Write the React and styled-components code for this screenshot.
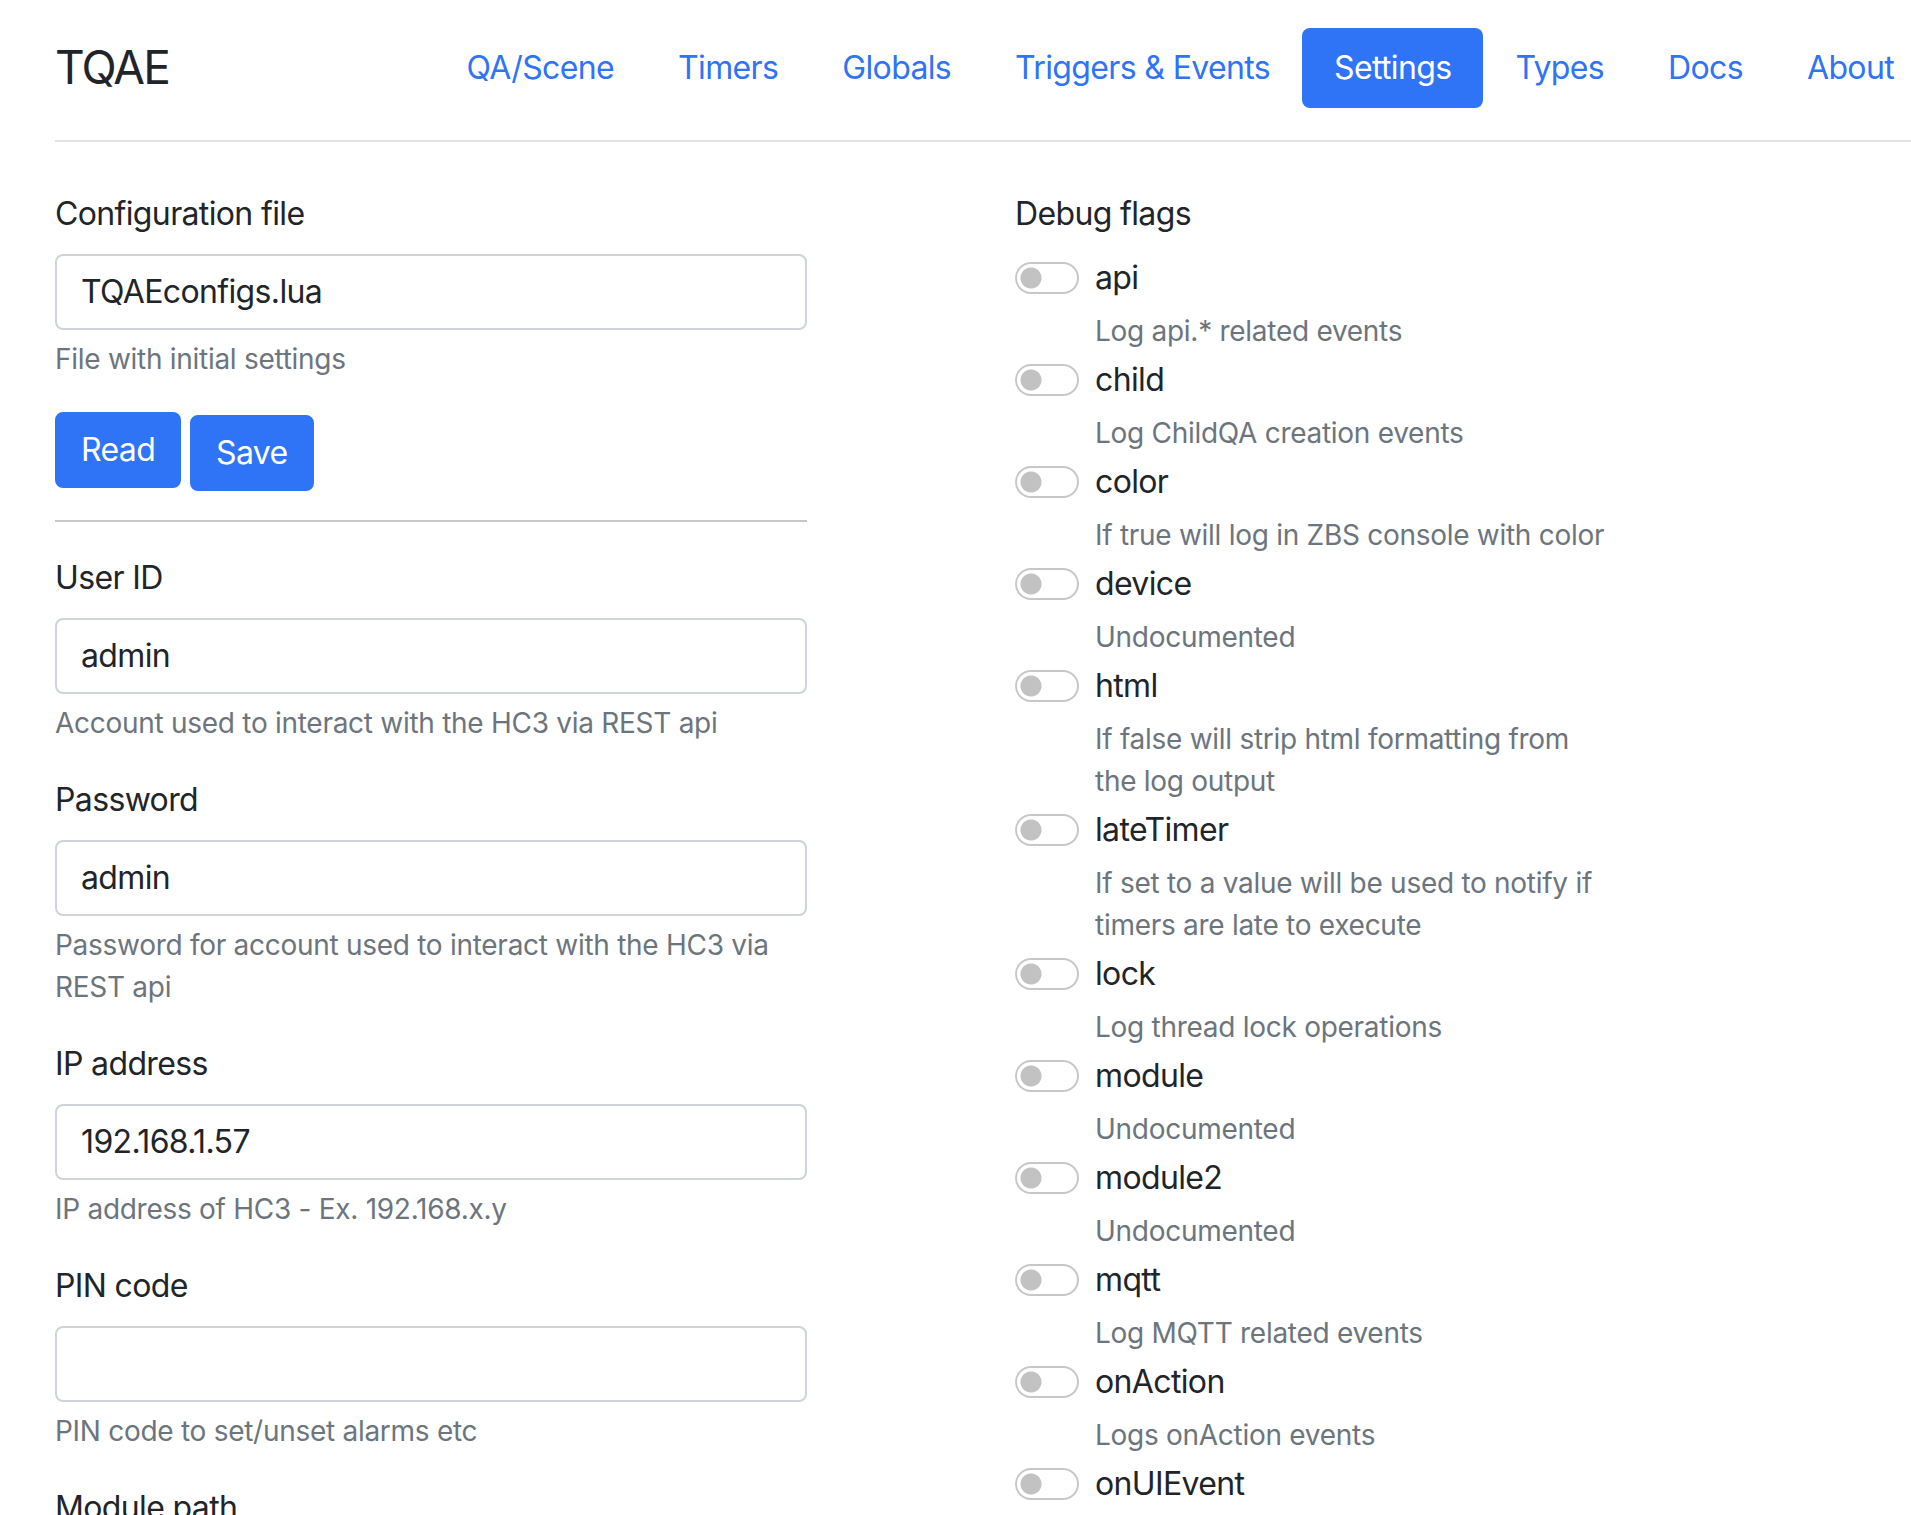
import React from "react";
import styled, { createGlobalStyle } from "styled-components";

const GlobalStyle = createGlobalStyle`
  *, *::before, *::after { box-sizing: border-box; }
  html, body { margin: 0; padding: 0; background: #fff; overflow-x: hidden; }
  body {
    font-family: Inter, "Helvetica Neue", "Liberation Sans", Arial, sans-serif;
    font-size: 32px;
    line-height: 1.5;
    letter-spacing: -0.02em;
    color: #212529;
  }
`;

const PRIMARY = "#2f73f6";

const Page = styled.div`
  width: 1926px;
  padding-left: 55px;
`;

const Header = styled.header`
  display: flex;
  align-items: center;
  padding: 28px 0 32px;
  margin-bottom: 48px;
  border-bottom: 2px solid #dee2e6;
`;

const Brand = styled.a`
  font-size: 46px;
  line-height: 1.2;
  letter-spacing: -0.04em;
  color: #212529;
  text-decoration: none;
  margin-right: auto;
`;

const NavList = styled.ul`
  display: flex;
  list-style: none;
  margin: 0;
  padding: 0;
`;

const NavLink = styled.a`
  display: block;
  padding: 16px 32px;
  font-size: 32px;
  line-height: 48px;
  border-radius: 8px;
  text-decoration: none;
  color: ${(p) => (p.$active ? "#fff" : PRIMARY)};
  background: ${(p) => (p.$active ? PRIMARY : "transparent")};
`;

const Columns = styled.div`
  display: flex;
  align-items: flex-start;
  gap: 208px;
`;

const LeftCol = styled.div`
  width: 752px;
  flex: none;
`;

const RightCol = styled.div`
  width: 596px;
  flex: none;
`;

const FormGroup = styled.div`
  margin-bottom: 32px;
`;

const Label = styled.label`
  display: block;
  margin-bottom: 16px;
  font-size: 32px;
  line-height: 48px;
`;

const Input = styled.input`
  display: block;
  width: 100%;
  padding: 12px 24px;
  font: inherit;
  font-size: 32px;
  line-height: 48px;
  letter-spacing: -0.02em;
  color: #212529;
  background: #fff;
  border: 2px solid #ced4da;
  border-radius: 8px;
  outline: none;
`;

const Hint = styled.div`
  margin-top: 8px;
  font-size: 28px;
  line-height: 42px;
  letter-spacing: -0.01em;
  color: #6c757d;
`;

const ButtonRow = styled.div`
  display: flex;
  align-items: flex-start;
  gap: 9px;
  height: 76px;
`;

const Button = styled.button`
  padding: 12px 24px;
  font: inherit;
  font-size: 32px;
  line-height: 48px;
  letter-spacing: -0.02em;
  color: #fff;
  background: ${PRIMARY};
  border: 2px solid ${PRIMARY};
  border-radius: 8px;
  margin-top: ${(p) => (p.$shift ? "3px" : "0")};
  cursor: pointer;
`;

const Rule = styled.hr`
  margin: 32px 0;
  border: 0;
  border-top: 2px solid #212529;
  opacity: 0.25;
`;

const FlagItem = styled.div`
  display: grid;
  grid-template-columns: 80px 1fr;
  margin-bottom: 4px;
`;

const Switch = styled.span`
  grid-row: 1;
  grid-column: 1;
  width: 64px;
  height: 32px;
  margin-top: 8px;
  border: 2px solid rgba(0, 0, 0, 0.22);
  border-radius: 32px;
  background: radial-gradient(circle at 14px 50%, #c2c2c2 10px, rgba(194, 194, 194, 0) 11px), #fff;
`;

const FlagName = styled.label`
  grid-row: 1;
  grid-column: 2;
  font-size: 32px;
  line-height: 48px;
`;

const FlagHint = styled(Hint)`
  grid-row: 2;
  grid-column: 2;
`;

const navItems = ["QA/Scene", "Timers", "Globals", "Triggers & Events", "Settings", "Types", "Docs", "About"];

const fields = [
  { label: "User ID", value: "admin", hint: "Account used to interact with the HC3 via REST api" },
  { label: "Password", value: "admin", hint: "Password for account used to interact with the HC3 via REST api" },
  { label: "IP address", value: "192.168.1.57", hint: "IP address of HC3 - Ex. 192.168.x.y" },
  { label: "PIN code", value: "", hint: "PIN code to set/unset alarms etc" },
  { label: "Module path", value: "", hint: "Path to modules" },
];

const flags = [
  ["api", "Log api.* related events"],
  ["child", "Log ChildQA creation events"],
  ["color", "If true will log in ZBS console with color"],
  ["device", "Undocumented"],
  ["html", "If false will strip html formatting from the log output"],
  ["lateTimer", "If set to a value will be used to notify if timers are late to execute"],
  ["lock", "Log thread lock operations"],
  ["module", "Undocumented"],
  ["module2", "Undocumented"],
  ["mqtt", "Log MQTT related events"],
  ["onAction", "Logs onAction events"],
  ["onUIEvent", "Logs onUIEvent events"],
];

export default function App() {
  return (
    <>
      <GlobalStyle />
      <Page>
        <Header>
          <Brand href="#">TQAE</Brand>
          <NavList>
            {navItems.map((n) => (
              <li key={n}>
                <NavLink href="#" $active={n === "Settings"}>{n}</NavLink>
              </li>
            ))}
          </NavList>
        </Header>
        <Columns>
          <LeftCol>
            <FormGroup>
              <Label>Configuration file</Label>
              <Input defaultValue="TQAEconfigs.lua" />
              <Hint>File with initial settings</Hint>
            </FormGroup>
            <ButtonRow>
              <Button>Read</Button>
              <Button $shift>Save</Button>
            </ButtonRow>
            <Rule />
            {fields.map((f) => (
              <FormGroup key={f.label}>
                <Label>{f.label}</Label>
                <Input defaultValue={f.value} />
                <Hint>{f.hint}</Hint>
              </FormGroup>
            ))}
          </LeftCol>
          <RightCol>
            <Label>Debug flags</Label>
            {flags.map(([name, desc]) => (
              <FlagItem key={name}>
                <Switch />
                <FlagName>{name}</FlagName>
                <FlagHint>{desc}</FlagHint>
              </FlagItem>
            ))}
          </RightCol>
        </Columns>
      </Page>
    </>
  );
}
